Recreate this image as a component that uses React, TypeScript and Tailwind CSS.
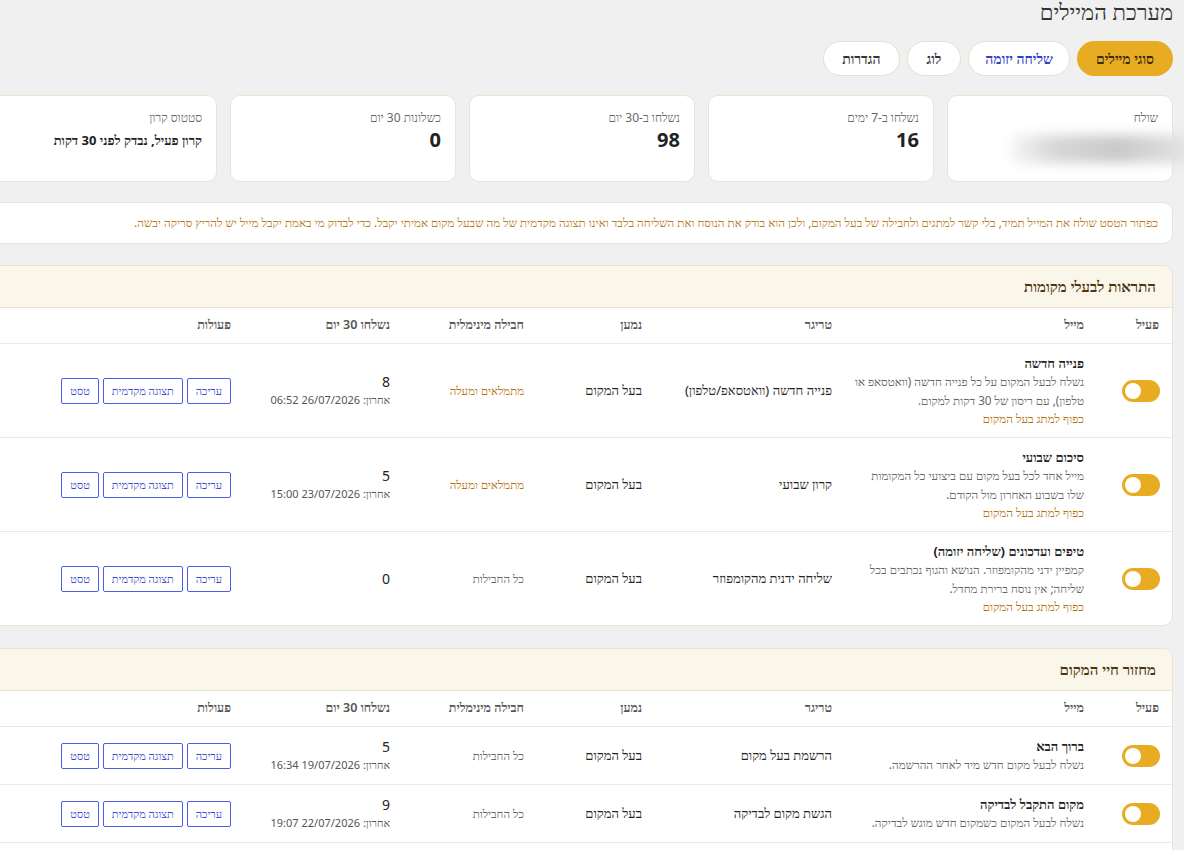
import React from "react";

type Row = {
  title: string;
  desc: string;
  note?: boolean;
  trigger: string;
  recipient: string;
  pkg: string;
  pkgOrange?: boolean;
  count: string;
  last?: string;
};

const section1: Row[] = [
  {
    title: "פנייה חדשה",
    desc: "נשלח לבעל המקום על כל פנייה חדשה (וואטסאפ או טלפון), עם ריסון של 30 דקות למקום.",
    note: true,
    trigger: "פנייה חדשה (וואטסאפ/טלפון)",
    recipient: "בעל המקום",
    pkg: "מתמלאים ומעלה",
    pkgOrange: true,
    count: "8",
    last: "אחרון: 26/07/2026 06:52",
  },
  {
    title: "סיכום שבועי",
    desc: "מייל אחד לכל בעל מקום עם ביצועי כל המקומות שלו בשבוע האחרון מול הקודם.",
    note: true,
    trigger: "קרון שבועי",
    recipient: "בעל המקום",
    pkg: "מתמלאים ומעלה",
    pkgOrange: true,
    count: "5",
    last: "אחרון: 23/07/2026 15:00",
  },
  {
    title: "טיפים ועדכונים (שליחה יזומה)",
    desc: "קמפיין ידני מהקומפוזר. הנושא והגוף נכתבים בכל שליחה; אין נוסח ברירת מחדל.",
    note: true,
    trigger: "שליחה ידנית מהקומפוזר",
    recipient: "בעל המקום",
    pkg: "כל החבילות",
    count: "0",
  },
];

const section2: Row[] = [
  {
    title: "ברוך הבא",
    desc: "נשלח לבעל מקום חדש מיד לאחר ההרשמה.",
    trigger: "הרשמת בעל מקום",
    recipient: "בעל המקום",
    pkg: "כל החבילות",
    count: "5",
    last: "אחרון: 19/07/2026 16:34",
  },
  {
    title: "מקום התקבל לבדיקה",
    desc: "נשלח לבעל המקום כשמקום חדש מוגש לבדיקה.",
    trigger: "הגשת מקום לבדיקה",
    recipient: "בעל המקום",
    pkg: "כל החבילות",
    count: "9",
    last: "אחרון: 22/07/2026 19:07",
  },
  {
    title: "מקום אושר",
    desc: "נשלח לבעל המקום כשהמקום אושר ופורסם.",
    trigger: "אישור מקום",
    recipient: "בעל המקום",
    pkg: "כל החבילות",
    count: "7",
    last: "אחרון: 21/07/2026 11:20",
  },
];

const gridCols =
  "grid grid-cols-[75px_252px_190px_118px_134px_159px_1fr]";

function Toggle() {
  return (
    <div className="w-[38px] h-[22px] rounded-full bg-[#e8ac22] flex items-center justify-end px-[3px]">
      <div className="w-[16px] h-[16px] rounded-full bg-white" />
    </div>
  );
}

function ActionBtn({ label }: { label: string }) {
  return (
    <button className="h-[26px] px-[8px] border border-[#4a5ee6] rounded-[2px] text-[11px] text-[#3a49d1] bg-white leading-none">
      {label}
    </button>
  );
}

function TableRow({ r }: { r: Row }) {
  return (
    <div className={`${gridCols} border-t border-[#efe8dc]`}>
      <div className="px-[12px] flex items-center">
        <Toggle />
      </div>
      <div className="pr-[13px] pl-[8px] py-[10px] flex flex-col justify-center">
        <div className="text-[13px] font-bold text-[#222] leading-[18px]">
          {r.title}
        </div>
        <div className="text-[11.7px] text-[#666] leading-[19px]">{r.desc}</div>
        {r.note && (
          <div className="text-[11.7px] text-[#b3730c] leading-[17px]">
            כפוף למתג בעל המקום
          </div>
        )}
      </div>
      <div className="px-[13px] flex items-center text-[13px] text-[#222]">
        {r.trigger}
      </div>
      <div className="px-[13px] flex items-center text-[13px] text-[#222]">
        {r.recipient}
      </div>
      <div
        className={`px-[13px] flex items-center text-[11.5px] ${
          r.pkgOrange ? "text-[#b3730c]" : "text-[#666]"
        }`}
      >
        {r.pkg}
      </div>
      <div className="px-[13px] flex flex-col justify-center">
        <div className="text-[14px] text-[#222] leading-[19px]">{r.count}</div>
        {r.last && (
          <div className="text-[11px] text-[#555] leading-[18px]">{r.last}</div>
        )}
      </div>
      <div className="px-[13px] flex items-center gap-[4px]">
        <ActionBtn label="עריכה" />
        <ActionBtn label="תצוגה מקדמית" />
        <ActionBtn label="טסט" />
      </div>
    </div>
  );
}

function Section({ title, rows }: { title: string; rows: Row[] }) {
  const headers = [
    "פעיל",
    "מייל",
    "טריגר",
    "נמען",
    "חבילה מינימלית",
    "נשלחו 30 יום",
    "פעולות",
  ];
  return (
    <div className="bg-white border border-[#ece2d0] rounded-[10px] overflow-hidden">
      <div className="h-[42px] bg-[#fbf6ea] flex items-center px-[16px] border-b border-[#ece2d0]">
        <span className="text-[15px] font-bold text-[#4a3510]">{title}</span>
      </div>
      <div className={`${gridCols} h-[35px]`}>
        {headers.map((h) => (
          <div
            key={h}
            className="px-[13px] flex items-center text-[12.5px] font-semibold text-[#555]"
          >
            {h}
          </div>
        ))}
      </div>
      {rows.map((r) => (
        <TableRow key={r.title} r={r} />
      ))}
    </div>
  );
}

function StatCard({ label, children }: { label: string; children: React.ReactNode }) {
  return (
    <div className="h-[87px] bg-white border border-[#efe3cf] rounded-[10px] pt-[13px] px-[14px]">
      <div className="text-[12px] text-[#666] leading-[18px]">{label}</div>
      {children}
    </div>
  );
}

export default function App() {
  return (
    <div
      dir="rtl"
      className="min-h-screen w-full overflow-hidden bg-[#f0f0f0] font-['Noto_Sans',system-ui]"
    >
      <div className="w-[1182px] mr-[11px] pb-10">
        <h1 className="text-[22px] leading-[26px] text-[#333] font-normal -mt-[2px]">
          מערכת המיילים
        </h1>

        <div className="flex gap-[7px] mt-[17px]">
          <button className="h-[35px] px-[19px] rounded-full bg-[#e8ac22] text-[14px] font-bold text-[#3a2a05]">
            סוגי מיילים
          </button>
          <button className="h-[35px] px-[16px] rounded-full bg-white border border-[#eadfcc] text-[14px] font-bold text-[#2c3ec8]">
            שליחה יזומה
          </button>
          <button className="h-[35px] px-[19px] rounded-full bg-white border border-[#eadfcc] text-[14px] font-bold text-[#333]">
            לוג
          </button>
          <button className="h-[35px] px-[18px] rounded-full bg-white border border-[#eadfcc] text-[14px] font-bold text-[#333]">
            הגדרות
          </button>
        </div>

        <div className="grid grid-cols-5 gap-[13px] mt-[19px]">
          <StatCard label="שולח">
            <div className="mt-[6px] h-[32px] flex items-center">
              <div className="h-[28px] w-[180px] mr-[-32px] bg-[linear-gradient(to_left,#e4e4e4,#c9c9c9_40%,#d6d6d6_75%,#f7f7f7)] blur-[6px] rounded" />
            </div>
          </StatCard>
          <StatCard label="נשלחו ב-7 ימים">
            <div className="text-[20px] font-bold text-[#222] mt-[1px] leading-[24px]">16</div>
          </StatCard>
          <StatCard label="נשלחו ב-30 יום">
            <div className="text-[20px] font-bold text-[#222] mt-[1px] leading-[24px]">98</div>
          </StatCard>
          <StatCard label="כשלונות 30 יום">
            <div className="text-[20px] font-bold text-[#222] mt-[1px] leading-[24px]">0</div>
          </StatCard>
          <StatCard label="סטטוס קרון">
            <div className="text-[13px] font-bold text-[#222] mt-[4px] leading-[18px]">
              קרון פעיל, נבדק לפני 30 דקות
            </div>
          </StatCard>
        </div>

        <div className="mt-[20px] h-[42px] bg-white border border-[#efe3cf] rounded-[10px] px-[14px] flex items-center text-[11.7px] text-[#b97a1a]">
          כפתור הטסט שולח את המייל תמיד, בלי קשר למתגים ולחבילה של בעל המקום, ולכן הוא בודק את הנוסח ואת השליחה בלבד ואינו תצוגה מקדמית של מה שבעל מקום אמיתי יקבל. כדי לבדוק מי באמת יקבל מייל יש להריץ סריקה יבשה.
        </div>

        <div className="mt-[21px]">
          <Section title="התראות לבעלי מקומות" rows={section1} />
        </div>
        <div className="mt-[22px]">
          <Section title="מחזור חיי המקום" rows={section2} />
        </div>
      </div>
    </div>
  );
}
